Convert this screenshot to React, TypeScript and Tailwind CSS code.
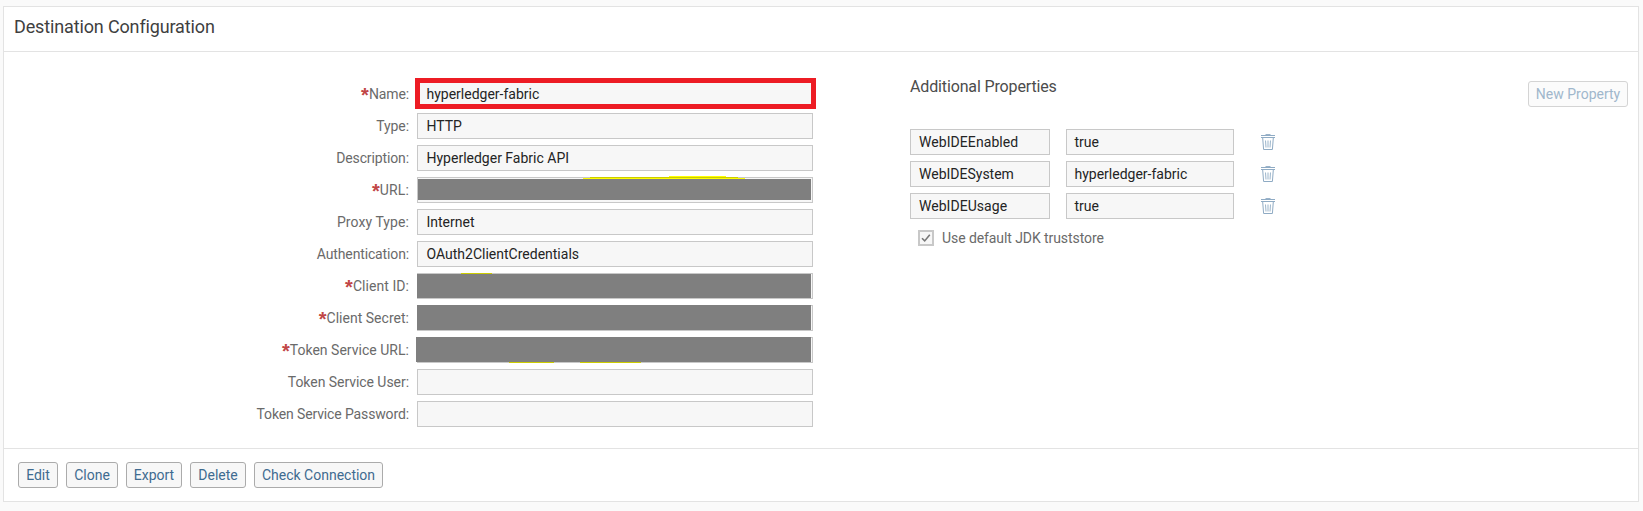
import React from "react";

type Mark = { className: string };
type Field = { label: string; value?: string; required?: boolean; marks?: Mark[]; tracking?: string };

const fields: Field[] = [
  {
    label: "Name",
    value: "hyperledger-fabric",
    required: true,
    tracking: "tracking-[-0.12px]",
    marks: [{ className: "-left-[3px] -top-[4px] h-[31px] w-[401px] border-[5px] border-[#ed1c24]" }],
  },
  { label: "Type", value: "HTTP", tracking: "tracking-[-0.06px]" },
  { label: "Description", value: "Hyperledger Fabric API", tracking: "tracking-[-0.12px]" },
  {
    label: "URL",
    required: true,
    tracking: "tracking-[0.15px]",
    marks: [
      { className: "left-[251px] -top-[2px] h-px w-[57px] bg-[#ffff00]" },
      { className: "left-[172px] -top-px h-px w-[148px] bg-[#cccc00]" },
      { className: "left-[165px] top-0 h-px w-[162px] bg-[#ffff00]" },
      { className: "left-0 top-px h-[21px] w-[393px] bg-[#7f7f7f]" },
    ],
  },
  { label: "Proxy Type", value: "Internet", tracking: "tracking-[0.08px]" },
  { label: "Authentication", value: "OAuth2ClientCredentials", tracking: "tracking-[-0.14px]" },
  {
    label: "Client ID",
    required: true,
    tracking: "tracking-[0.06px]",
    marks: [
      { className: "left-[43px] -top-px h-px w-[31px] bg-[#cccc00]" },
      { className: "-left-px top-0 h-[24px] w-[394px] bg-[#7f7f7f]" },
    ],
  },
  {
    label: "Client Secret",
    required: true,
    tracking: "tracking-[0.02px]",
    marks: [{ className: "-left-px -top-px h-[25px] w-[394px] bg-[#7f7f7f]" }],
  },
  {
    label: "Token Service URL",
    required: true,
    tracking: "tracking-[0.02px]",
    marks: [
      { className: "-left-[2px] -top-px h-[25px] w-[395px] bg-[#7f7f7f]" },
      { className: "left-[91px] top-[24px] h-px w-[45px] bg-[#cccc00]" },
      { className: "left-[162px] top-[24px] h-px w-[61px] bg-[#cccc00]" },
    ],
  },
  { label: "Token Service User", tracking: "tracking-[-0.05px]" },
  { label: "Token Service Password", tracking: "tracking-[-0.13px]" },
];

const properties = [
  { key: "WebIDEEnabled", value: "true", tracking: "tracking-[0.07px]" },
  { key: "WebIDESystem", value: "hyperledger-fabric", tracking: "tracking-normal" },
  { key: "WebIDEUsage", value: "true", tracking: "tracking-[0.04px]" },
];

const actions = [
  { label: "Edit", width: "w-[40px]" },
  { label: "Clone", width: "w-[52px]" },
  { label: "Export", width: "w-[56px]" },
  { label: "Delete", width: "w-[56px]" },
  { label: "Check Connection", width: "w-[129px]" },
];

function Box({ value, className, children }: { value?: string; className: string; children?: React.ReactNode }) {
  return (
    <div
      className={`relative flex h-[26px] shrink-0 items-center whitespace-nowrap border border-[#c8c8c8] bg-[#f7f7f7] text-[#242424] ${className}`}
    >
      {value}
      {children}
    </div>
  );
}

function TrashIcon() {
  return (
    <svg width="16" height="17" viewBox="0 0 16 17" fill="none" stroke="#8fabc4">
      <path d="M5.5 0.7h5" strokeWidth="1.2" />
      <path d="M1 1.5h14" strokeWidth="1" />
      <path d="M1 3.5h14" strokeWidth="1" />
      <path d="M2.7 4l.9 11.5h8.8L13.3 4" strokeWidth="1" />
      <path d="M5.5 6.5l.5 7M8 6.5v7M10.5 6.5l-.5 7" strokeWidth="0.9" />
    </svg>
  );
}

export default function App() {
  return (
    <div className="h-[511px] w-[1643px] bg-[#fafafa] pl-[3px] pt-[6px] font-['Roboto',sans-serif] text-[14px] leading-[18px]">
      <main className="flex h-[496px] w-[1636px] flex-col border border-[#e3e3e3] bg-white">
        <header className="flex h-[45px] items-center border-b border-[#e3e3e3] pb-1 pl-[10px]">
          <h1 className="text-[18px] leading-6 tracking-[-0.14px] text-[#3f3f3f]">
            <span>Destination Configuration</span>
          </h1>
        </header>

        <div className="flex h-[396px] items-start">
          <div className="flex flex-col gap-1.5 pt-[29px]">
            {fields.map((f) => (
              <div key={f.label} className="flex h-[26px] items-center">
                <div className="flex w-[405px] justify-end whitespace-nowrap text-[#6a6a6a]">
                  {f.required && (
                    <span className="pt-px font-['Liberation_Sans',sans-serif] text-[20px] font-bold leading-[18px] text-[#c14646]">
                      *
                    </span>
                  )}
                  <span className={f.tracking}>{f.label}:</span>
                </div>
                <Box value={f.value} className="ml-2 w-[396px] pl-[8.5px]">
                  {f.marks?.map((m) => <span key={m.className} className={`absolute ${m.className}`} />)}
                </Box>
              </div>
            ))}
          </div>

          <section className="ml-[97px] flex w-[718px] flex-col pt-[29px]">
            <div className="flex h-[26px] justify-between">
              <h2 className="-mt-[4px] h-5 text-[16px] leading-5 tracking-[-0.14px] text-[#4c4c4c]">
                <span>Additional Properties</span>
              </h2>
              <button className="h-[26px] w-[100px] rounded-[3px] border border-[#d4d4d4] bg-[#fbfbfb] text-[#a0b7cc]">
                <span>New Property</span>
              </button>
            </div>
            <div className="mt-[22px] flex flex-col gap-1.5">
              {properties.map((p) => (
                <div key={p.key} className="flex h-[26px] items-center">
                  <Box value={p.key} className={`w-[140px] pl-2 ${p.tracking}`} />
                  <Box value={p.value} className="ml-4 w-[168px] pl-[7.5px]" />
                  <span className="ml-[26px] mt-px">
                    <TrashIcon />
                  </span>
                </div>
              ))}
            </div>
            <label className="mt-[11px] flex h-4 items-center pl-2 text-[#6a6a6a]">
              <span className="flex size-4 items-center justify-center border-2 border-[#c8c8c8] bg-[#f7f7f7]">
                <svg width="10" height="10" viewBox="0 0 10 10" fill="none" stroke="#777" strokeWidth="1.6">
                  <path d="M1 5.2l2.7 2.7L8.8 1.7" />
                </svg>
              </span>
              <span className="ml-2 tracking-[-0.08px]">Use default JDK truststore</span>
            </label>
          </section>
        </div>

        <footer className="flex flex-1 gap-2 border-t border-[#e3e3e3] pl-[14px] pt-[13px]">
          {actions.map((a) => (
            <button
              key={a.label}
              className={`h-[26px] whitespace-nowrap rounded-[3px] border border-[#ababab] bg-[#f7f7f7] text-[#3f6b90] ${a.width}`}
            >
              <span>{a.label}</span>
            </button>
          ))}
        </footer>
      </main>
    </div>
  );
}
